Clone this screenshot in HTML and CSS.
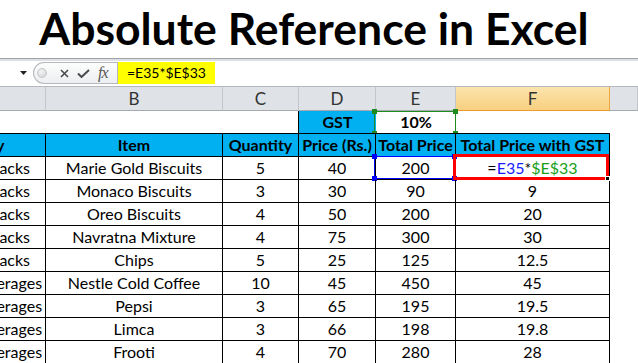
FILE: index.html
```html
<!DOCTYPE html>
<html>
<head>
<meta charset="utf-8">
<link rel="stylesheet" href="styles.css">
</head>
<body>
<div class="page">
  <h1 class="title">Absolute Reference in Excel</h1>
  <div class="fbar">
    <div class="namebox">
      <svg class="arrow" width="7" height="4" viewBox="0 0 7 4"><path d="M0 0h7L3.5 4z" fill="#222"/></svg>
    </div>
    <div class="pill">
      <span class="dot"></span>
      <svg class="ico" width="9" height="9" viewBox="0 0 9 9"><path d="M1 1l7 7M8 1L1 8" stroke="#4a4a4a" stroke-width="1.6" fill="none"/></svg>
      <svg class="ico" width="13" height="9" viewBox="0 0 13 9"><path d="M1 4.5l3.5 3.5L12 1" stroke="#4a4a4a" stroke-width="2" fill="none"/></svg>
      <span class="fx">fx</span>
    </div>
    <div class="formula">=E35*$E$33</div>
    <div class="fill"></div>
  </div>
  <div class="sheet">
    <div class="ch"></div><div class="ch">B</div><div class="ch">C</div><div class="ch">D</div><div class="ch">E</div><div class="ch sel">F</div><div class="ch"></div>

    <div class="c"></div><div class="c"></div><div class="c"></div><div class="c hd gst">GST</div><div class="c pct"><span class="hl green"><i class="tl"></i><i class="tr"></i><i class="bl"></i><i class="br"></i></span>10%</div><div class="c"></div><div class="c"></div>

    <div class="c b hd top a cat"><span>Category</span></div><div class="c b hd top">Item</div><div class="c b hd top">Quantity</div><div class="c b hd top">Price (Rs.)</div><div class="c b hd top">Total Price</div><div class="c b hd top">Total Price with GST</div><div class="c"></div>

    <div class="c b a"><span>Snacks</span></div><div class="c b">Marie Gold Biscuits</div><div class="c b">5</div><div class="c b">40</div><div class="c b ref"><span class="hl blue"><i class="tl"></i><i class="tr"></i><i class="bl"></i><i class="br"></i></span>200</div><div class="c b active"><span class="sel-box"><i class="handle"></i></span>=<span class="fb">E35</span>*<span class="fg">$E$33</span></div><div class="c"></div>

    <div class="c b a"><span>Snacks</span></div><div class="c b">Monaco Biscuits</div><div class="c b">3</div><div class="c b">30</div><div class="c b">90</div><div class="c b">9</div><div class="c"></div>

    <div class="c b a"><span>Snacks</span></div><div class="c b">Oreo Biscuits</div><div class="c b">4</div><div class="c b">50</div><div class="c b">200</div><div class="c b">20</div><div class="c"></div>

    <div class="c b a"><span>Snacks</span></div><div class="c b">Navratna Mixture</div><div class="c b">4</div><div class="c b">75</div><div class="c b">300</div><div class="c b">30</div><div class="c"></div>

    <div class="c b a"><span>Snacks</span></div><div class="c b">Chips</div><div class="c b">5</div><div class="c b">25</div><div class="c b">125</div><div class="c b">12.5</div><div class="c"></div>

    <div class="c b a"><span>Beverages</span></div><div class="c b">Nestle Cold Coffee</div><div class="c b">10</div><div class="c b">45</div><div class="c b">450</div><div class="c b">45</div><div class="c"></div>

    <div class="c b a"><span>Beverages</span></div><div class="c b">Pepsi</div><div class="c b">3</div><div class="c b">65</div><div class="c b">195</div><div class="c b">19.5</div><div class="c"></div>

    <div class="c b a"><span>Beverages</span></div><div class="c b">Limca</div><div class="c b">3</div><div class="c b">66</div><div class="c b">198</div><div class="c b">19.8</div><div class="c"></div>

    <div class="c b a"><span>Beverages</span></div><div class="c b">Frooti</div><div class="c b">4</div><div class="c b">70</div><div class="c b">280</div><div class="c b">28</div><div class="c"></div>
  </div>
</div>
</body>
</html>
```
FILE: styles.css
```css
* { box-sizing: border-box; }
html, body { margin: 0; padding: 0; background: #fff; }
.page { width: 638px; height: 363px; overflow: hidden; font-family: Lato, "Liberation Sans", sans-serif; color: #000; }

.title {
  margin: 0;
  height: 58px;
  font-size: 44.5px;
  font-weight: 700;
  line-height: 56px;
  padding-bottom: 2px;
  text-align: center;
  padding-right: 10px;
}

.fbar {
  display: flex;
  height: 29px;
  border-top: 1px solid #9fa3a8;
  border-bottom: 1px solid #b5b9be;
  background: linear-gradient(#dde1e6 0, #dde1e6 2px, #fff 2px);
  padding-top: 3px;
}
.namebox { width: 33px; height: 22px; position: relative; display: flex; justify-content: flex-end; align-items: center; padding-right: 6px; }
.pill {
  width: 84px;
  height: 22px;
  border: 1px solid #b4b7bb;
  border-right: none;
  border-radius: 11px 0 0 11px;
  background: linear-gradient(#fdfdfd, #eceef1);
  display: flex;
  align-items: center;
  padding-left: 3px;
}
.dot { width: 10px; height: 10px; border-radius: 50%; border: 1px solid #c4c6c9; background: radial-gradient(circle at 40% 35%, #f4f4f4, #cfd1d4); margin-right: 13px; }
.ico { display: block; }
.ico:nth-of-type(1) { margin-right: 8px; }
.ico:nth-of-type(2) { margin-right: 8px; }
.fx { font-family: "Liberation Serif", serif; font-style: italic; font-size: 16px; color: #555; letter-spacing: -1px; line-height: 20px; }
.formula {
  width: 98px;
  height: 22px;
  background: #ffff00;
  border-left: 1px solid #b4b7bb;
  font-size: 14px;
  line-height: 22px;
  padding-left: 9px;
}
.fill { flex: 1; }

.sheet {
  display: grid;
  grid-template-columns: 46px 177px 76px 77px 80px 154px 1fr;
  grid-template-rows: 24px 22px 24px repeat(9, 23px);
}
.ch {
  background: #dfe3e8;
  border-right: 1px solid #c3c7cc;
  border-bottom: 1px solid #a6aaaf;
  text-align: center;
  font-size: 17px;
  line-height: 23px;
  color: #333;
}
.ch.sel { background: linear-gradient(#fbe4ad, #f8d07f); border-right-color: #f0a640; border-bottom-color: #f09a30; }
.ch:last-child { border-right: none; }

.c { position: relative; text-align: center; font-size: 16px; line-height: 22px; white-space: nowrap; }
.b { border-right: 1px solid #000; border-bottom: 1px solid #000; }
.hd { background: #00b0f0; font-weight: 700; }
.top { border-top: 1px solid #000; }
.gst { box-shadow: -1px 0 0 #000; }
.pct { font-weight: 700; }

.a { overflow: hidden; }
.a span { display: block; width: 100px; margin-left: -44px; text-align: center; }
.a.cat span { margin-left: -78px; }

.hl { position: absolute; left: -2px; right: 0; top: 0; bottom: -1px; border: 1px solid; }
.hl i { position: absolute; width: 5px; height: 5px; }
.hl .tl { left: -3px; top: -3px; }
.hl .tr { right: -3px; top: -3px; }
.hl .bl { left: -3px; bottom: -3px; }
.hl .br { right: -3px; bottom: -3px; }
.green { border-color: #1f8a1f; }
.green i { background: #1f8a1f; }
.blue { border-color: #0000ff; top: -1px; bottom: 0; }
.blue i { background: #0000ff; }

.sel-box { position: absolute; left: -3px; top: -3px; right: 0; bottom: -1px; border: 3px solid #ff0000; z-index: 2; }
.handle { position: absolute; right: -4px; bottom: -4px; width: 5px; height: 5px; background: #000; border: 1px solid #fff; }
.fb { color: #1a1aff; }
.fg { color: #18a018; }
```
